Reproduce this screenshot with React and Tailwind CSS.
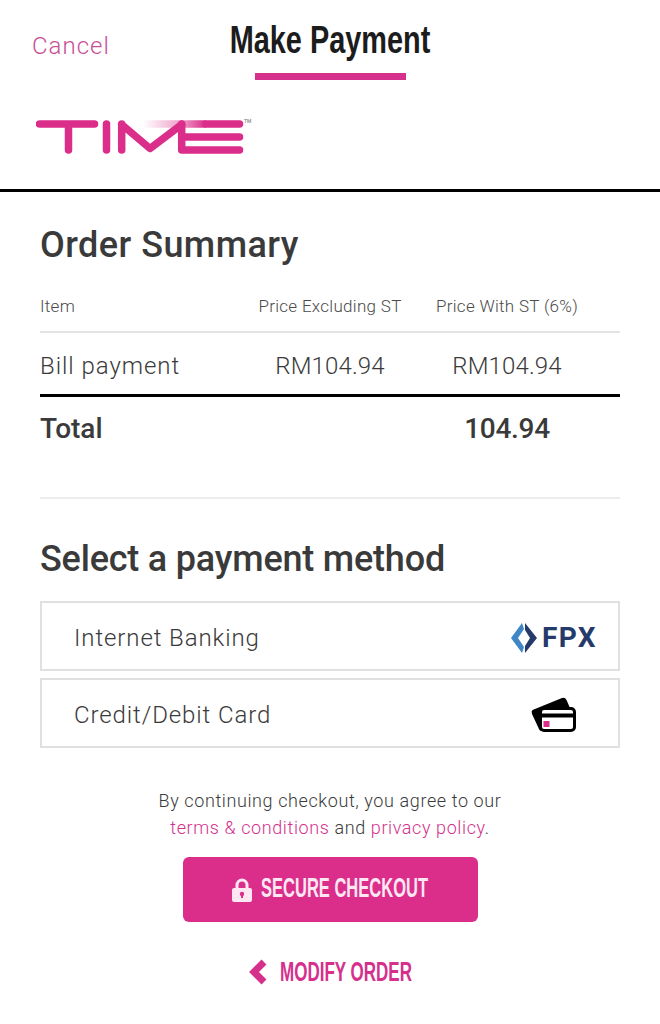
import React from 'react';

const PINK = '#db2d8a';

const TimeLogo = () => (
  <svg width="222" height="42" viewBox="0 0 222 42" className="block">
    <defs>
      <linearGradient id="fade" x1="0" x2="1" y1="0" y2="0">
        <stop offset="0" stopColor="#db2d8a" stopOpacity="0" />
        <stop offset="0.6" stopColor="#db2d8a" stopOpacity="0.45" />
        <stop offset="1" stopColor="#db2d8a" />
      </linearGradient>
    </defs>
    <g fill="none" stroke="#db2d8a" strokeWidth="7.5" strokeLinecap="round" strokeLinejoin="round">
      <path d="M3.5 7H58.5M32.5 7V33" />
      <path d="M70.5 7V33" />
      <path d="M85.7 7V33M85.7 7.5L114 31.5L145.7 7.5" />
      <path d="M145.7 7V33H203.5M145.7 20H203.5" />
      <path d="M170 7H203.5" />
    </g>
    <rect x="107" y="3.25" width="63" height="7.5" fill="url(#fade)" />
    <text x="208" y="6" fontSize="5" fontWeight="700" fill="#999" fontFamily="Roboto, sans-serif">TM</text>
  </svg>
);

const FpxLogo = () => (
  <div className="flex items-center gap-[5px]">
    <svg width="26" height="30" viewBox="0 0 26 30">
      <path d="M11 0L0 15L11 30L13 24L7 15L13 6Z" fill="#3f86c6" />
      <path d="M14 0L26 15L14 30V23L19 15L14 7Z" fill="#243a6b" />
    </svg>
    <span className="text-[28px] leading-none font-bold text-[#243a6b] tracking-[1.5px]">FPX</span>
  </div>
);

const CardIcon = () => (
  <svg width="46" height="36" viewBox="0 0 46 36" className="mr-[20px]">
    <path d="M1.5 13L31 1Q34 0 35.5 3L39 11H11V34Q8.5 34 7.5 31L1 17Q0 14 1.5 13Z" fill="#000" />
    <rect x="9.5" y="11.5" width="34" height="22" rx="3.5" fill="#fff" stroke="#000" strokeWidth="3" />
    <rect x="9.5" y="16.5" width="34" height="4" fill="#000" />
    <rect x="12.5" y="24" width="6" height="6" fill={PINK} />
  </svg>
);

const LockIcon = () => (
  <svg width="20" height="24" viewBox="0 0 20 24">
    <path d="M5 11V7a5 5 0 0 1 10 0v4" fill="none" stroke="#fce7f3" strokeWidth="3" />
    <rect x="0" y="10" width="20" height="14" rx="2" fill="#fce7f3" />
    <circle cx="10" cy="16" r="2.2" fill={PINK} />
    <rect x="9" y="16" width="2" height="4" fill={PINK} />
  </svg>
);

const PaymentOption = ({ label, children }) => (
  <div className="flex h-[70px] items-center justify-between border-2 border-[#e0e0e0] pl-[32px] pr-[21px] pt-[4px]">
    <span className="text-[24px] font-light tracking-[0.9px] text-[#3a3a3a]">{label}</span>
    {children}
  </div>
);

export default function App() {
  return (
    <div className="min-h-[1024px] w-[660px] bg-white font-['Roboto',sans-serif] text-[#3a3a3a]">
      {/* header */}
      <div className="flex h-[192px] flex-col border-b-[3px] border-black">
        <div className="grid h-[81px] grid-cols-[1fr_auto_1fr]">
          <div className="pl-[32px] pt-[28px] text-[24px] font-light leading-[36px] tracking-[1px] text-[#c84f96]">Cancel</div>
          <div className="flex flex-col items-center">
            <div className="mt-[16px] flex w-[202px] justify-center whitespace-nowrap font-['Liberation_Sans',sans-serif] text-[38px] font-bold leading-[48px] text-[#1c1c1c] [transform:scaleX(0.76)]">Make Payment</div>
            <div className="mt-[9px] h-[7px] w-[151px] bg-[#d4308c]" />
          </div>
          <div />
        </div>
        <div className="pl-[36px] pt-[36px]">
          <TimeLogo />
        </div>
      </div>

      <div className="px-[40px]">
        {/* order summary */}
        <h1 className="mt-[30px] text-[36px] font-medium leading-[46px] tracking-[0.45px]">Order Summary</h1>

        <div className="mt-[18px] grid h-[47px] grid-cols-[190px_200px_154px] items-center border-b-2 border-[#e3e3e3] pb-[3px] text-[17px] font-light tracking-[0.3px] text-[#4a4a4a]">
          <span>Item</span>
          <span className="text-center">Price Excluding ST</span>
          <span className="whitespace-nowrap text-center">Price With ST (6%)</span>
        </div>
        <div className="grid h-[64px] grid-cols-[190px_200px_154px] items-center border-b-[3px] border-black pt-[5px] text-[24px] font-light">
          <span className="tracking-[0.95px]">Bill payment</span>
          <span className="text-center tracking-[0.15px]">RM104.94</span>
          <span className="text-center tracking-[0.15px]">RM104.94</span>
        </div>
        <div className="grid h-[64px] grid-cols-[190px_200px_154px] items-center text-[28px] font-medium">
          <span>Total</span>
          <span />
          <span className="text-center tracking-[-0.3px]">104.94</span>
        </div>

        <div className="mt-[36px] border-t-2 border-[#ececec]" />

        {/* payment method */}
        <h2 className="mt-[37px] text-[36px] font-medium leading-[46px] tracking-[-0.2px]">Select a payment method</h2>

        <div className="mt-[19px] flex flex-col gap-[7px]">
          <PaymentOption label="Internet Banking"><FpxLogo /></PaymentOption>
          <PaymentOption label="Credit/Debit Card"><CardIcon /></PaymentOption>
        </div>

        <p className="mt-[39px] text-center text-[18px] font-light leading-[27px] tracking-[0.6px] text-[#3a3a3a]">
          By continuing checkout, you agree to our<br />
          <span className="text-[#d4308c]">terms &amp; conditions</span> and <span className="text-[#d4308c]">privacy policy</span>.
        </p>

        <div className="mt-[16px] flex justify-center">
          <button className="flex h-[65px] w-[295px] items-center justify-center gap-[9px] rounded-[6px] bg-[#db2d8a] text-[#fce7f3]">
            <LockIcon />
            <span className="flex w-[167px] justify-center whitespace-nowrap pb-[3px] font-['Liberation_Sans',sans-serif] text-[28px] font-bold [transform:scaleX(0.59)]">SECURE CHECKOUT</span>
          </button>
        </div>

        <div className="mt-[30px] flex items-center justify-center gap-[12px] text-[#d4308c]">
          <svg width="20" height="26" viewBox="0 0 20 26">
            <path d="M16 3L6 13L16 23" fill="none" stroke="#d4308c" strokeWidth="7" strokeLinejoin="miter" />
          </svg>
          <span className="flex w-[132px] justify-center whitespace-nowrap font-['Liberation_Sans',sans-serif] text-[27px] font-bold [transform:scaleX(0.63)]">MODIFY ORDER</span>
        </div>
      </div>
    </div>
  );
}
